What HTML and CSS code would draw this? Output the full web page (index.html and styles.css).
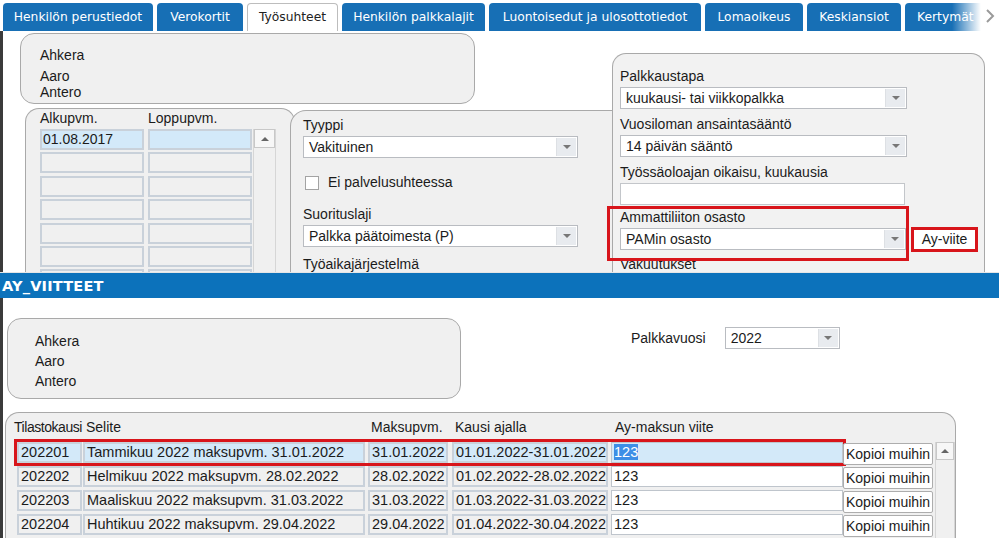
FILE: index.html
```html
<!DOCTYPE html>
<html lang="fi">
<head>
<meta charset="utf-8">
<title>Työsuhteet – AY_VIITTEET</title>
<link rel="stylesheet" href="styles.css">
</head>
<body>
<div class="page">
  <nav class="tabs">
    <div class="tab t1">Henkilön perustiedot</div>
    <div class="tab t2">Verokortit</div>
    <div class="tab t3 active">Työsuhteet</div>
    <div class="tab t4">Henkilön palkkalajit</div>
    <div class="tab t5">Luontoisedut ja ulosottotiedot</div>
    <div class="tab t6">Lomaoikeus</div>
    <div class="tab t7">Keskiansiot</div>
    <div class="tab t8">Kertymät</div>
    <div class="tab-more"><svg width="10" height="14" viewBox="0 0 10 14"><polyline points="2,1 8,7 2,13" fill="none" stroke="#9a9a9a" stroke-width="2"/></svg></div>
  </nav>

  <section class="top">
    <div class="namebox top-name">
      <div class="surname">Ahkera</div>
      <div>Aaro</div>
      <div>Antero</div>
    </div>

    <div class="dates">
      <div class="dates-head">
        <span class="dh">Alkupvm.</span>
        <span class="dh">Loppupvm.</span>
      </div>
      <div class="dates-body">
        <div class="dates-grid">
          <div class="cell sel">01.08.2017</div><div class="cell sel"></div>
          <div class="cell"></div><div class="cell"></div>
          <div class="cell"></div><div class="cell"></div>
          <div class="cell"></div><div class="cell"></div>
          <div class="cell"></div><div class="cell"></div>
          <div class="cell"></div><div class="cell"></div>
          <div class="cell"></div><div class="cell"></div>
        </div>
        <div class="vscroll dscroll"><div class="vbtn"></div></div>
      </div>
    </div>

    <div class="mid">
      <div class="lbl">Tyyppi</div>
      <div class="select w275"><span class="val">Vakituinen</span><span class="arrow"></span></div>
      <label class="check"><span class="box"></span>Ei palvelusuhteessa</label>
      <div class="lbl l-suor">Suorituslaji</div>
      <div class="select w275"><span class="val">Palkka päätoimesta (P)</span><span class="arrow"></span></div>
      <div class="lbl l-tyo">Työaikajärjestelmä</div>
    </div>

    <div class="right">
      <div class="lbl first">Palkkaustapa</div>
      <div class="select w287"><span class="val">kuukausi- tai viikkopalkka</span><span class="arrow"></span></div>
      <div class="lbl">Vuosiloman ansaintasääntö</div>
      <div class="select w287"><span class="val">14 päivän sääntö</span><span class="arrow"></span></div>
      <div class="lbl">Työssäoloajan oikaisu, kuukausia</div>
      <div class="input w285"></div>
      <div class="union-row">
        <div class="hl-box">
          <div class="lbl tight">Ammattiliiton osasto</div>
          <div class="select w286"><span class="val">PAMin osasto</span><span class="arrow"></span></div>
        </div>
        <button class="btn ay-btn">Ay-viite</button>
      </div>
      <div class="lbl l-vak">Vakuutukset</div>
    </div>
  </section>

  <div class="bar">AY_VIITTEET</div>

  <section class="lower">
    <div class="lower-head">
      <div class="namebox low-name">
        <div>Ahkera</div>
        <div>Aaro</div>
        <div>Antero</div>
      </div>
      <div class="year">
        <span class="year-lbl">Palkkavuosi</span>
        <div class="select w115"><span class="val">2022</span><span class="arrow"></span></div>
      </div>
    </div>

    <div class="gpanel">
      <div class="ghead">
        <span class="gh c-h1">Tilastokausi</span>
        <span class="gh c-h2">Selite</span>
        <span class="gh c-h3">Maksupvm.</span>
        <span class="gh c-h4">Kausi ajalla</span>
        <span class="gh">Ay-maksun viite</span>
      </div>
      <div class="gbody">
        <div class="grows">
          <div class="grow">
            <div class="gcells current">
              <div class="cell c1">202201</div>
              <div class="cell c2">Tammikuu 2022 maksupvm. 31.01.2022</div>
              <div class="cell c3">31.01.2022</div>
              <div class="cell c4">01.01.2022-31.01.2022</div>
              <div class="ref c5"><span class="selected-text">123</span></div>
            </div>
            <button class="btn copy">Kopioi muihin</button>
          </div>
          <div class="grow">
            <div class="gcells">
              <div class="cell c1">202202</div>
              <div class="cell c2">Helmikuu 2022 maksupvm. 28.02.2022</div>
              <div class="cell c3">28.02.2022</div>
              <div class="cell c4">01.02.2022-28.02.2022</div>
              <div class="ref c5">123</div>
            </div>
            <button class="btn copy">Kopioi muihin</button>
          </div>
          <div class="grow">
            <div class="gcells">
              <div class="cell c1">202203</div>
              <div class="cell c2">Maaliskuu 2022 maksupvm. 31.03.2022</div>
              <div class="cell c3">31.03.2022</div>
              <div class="cell c4">01.03.2022-31.03.2022</div>
              <div class="ref c5">123</div>
            </div>
            <button class="btn copy">Kopioi muihin</button>
          </div>
          <div class="grow">
            <div class="gcells">
              <div class="cell c1">202204</div>
              <div class="cell c2">Huhtikuu 2022 maksupvm. 29.04.2022</div>
              <div class="cell c3">29.04.2022</div>
              <div class="cell c4">01.04.2022-30.04.2022</div>
              <div class="ref c5">123</div>
            </div>
            <button class="btn copy">Kopioi muihin</button>
          </div>
          <div class="grow">
            <div class="gcells">
              <div class="cell c1"></div>
              <div class="cell c2"></div>
              <div class="cell c3"></div>
              <div class="cell c4"></div>
              <div class="ref c5"></div>
            </div>
            <button class="btn copy blank"></button>
          </div>
        </div>
        <div class="vscroll gscroll"><div class="vbtn"></div></div>
      </div>
    </div>
  </section>
</div>
</body>
</html>
```

FILE: styles.css
```css
html, body {
  margin: 0;
  padding: 0;
  background: #fff;
}

.page {
  width: 999px;
  height: 538px;
  overflow: hidden;
  font-family: "Liberation Sans", Arial, sans-serif;
  font-size: 14px;
  color: #1b1b1b;
}

/* ---------- tabs ---------- */
.tabs {
  position: relative;
  display: flex;
  align-items: flex-end;
  gap: 4px;
  height: 31px;
  padding-left: 3px;
  background: #fff;
  overflow: hidden;
}

.tab {
  flex: none;
  box-sizing: border-box;
  height: 28px;
  line-height: 28px;
  background: #176fb5;
  color: #fff;
  font-family: "DejaVu Sans", sans-serif;
  font-size: 12.3px;
  text-align: center;
  white-space: nowrap;
  border-radius: 4px 4px 0 0;
}
.t1 { width: 150px; }
.t2 { width: 86px; }
.t3 { width: 91px; }
.t4 { width: 143px; }
.t5 { width: 212px; }
.t6 { width: 98px; }
.t7 { width: 94px; }
.t8 { width: 80px; text-align: left; padding-left: 12px; }

.tab.active {
  background: #fff;
  color: #222;
  border: 1px solid #bdbdbd;
  border-bottom: none;
  line-height: 27px;
}

.tabs::after {
  content: "";
  position: absolute;
  top: 0;
  bottom: 0;
  left: 952px;
  width: 34px;
  background: linear-gradient(to right, rgba(255,255,255,0), #fff 85%);
}

.tab-more {
  position: absolute;
  right: 4px;
  top: 9px;
  z-index: 2;
}

/* ---------- shared controls ---------- */
.namebox {
  box-sizing: border-box;
  background: #f0f0f0;
  border: 1px solid #a9a9a9;
  border-radius: 14px;
}

.lbl {
  line-height: 17px;
  white-space: nowrap;
}

.select {
  display: flex;
  box-sizing: border-box;
  height: 22px;
  margin-top: 2px;
  background: #fff;
  border: 1px solid #b9bcc1;
}
.select .val {
  flex: 1;
  padding-left: 5px;
  line-height: 20px;
  white-space: nowrap;
  overflow: hidden;
}
.select .arrow {
  width: 19px;
  margin: 1px;
  background: #e8ebef;
  border-left: 1px solid #dde0e4;
  display: flex;
  align-items: center;
  justify-content: center;
}
.select .arrow::before {
  content: "";
  border-left: 4px solid transparent;
  border-right: 4px solid transparent;
  border-top: 4px solid #777;
}

.w275 { width: 275px; }
.w285 { width: 285px; }
.w286 { width: 286px; }
.w287 { width: 287px; }
.w115 { width: 115px; }

.input {
  box-sizing: border-box;
  height: 22px;
  margin-top: 2px;
  background: #fff;
  border: 1px solid #c3c6ca;
}

.btn {
  box-sizing: border-box;
  padding: 0;
  background: #fff;
  border: 1px solid #adadad;
  border-radius: 2px;
  font-family: "Liberation Sans", Arial, sans-serif;
  font-size: 14px;
  color: #1b1b1b;
}

.cell {
  box-sizing: border-box;
  height: 21px;
  background: #f0f0f0;
  border: 2px solid #c9d1da;
  line-height: 17px;
  padding-left: 2px;
  white-space: nowrap;
  overflow: hidden;
}
.cell.sel { background: #d3e9f9; }

.vscroll {
  box-sizing: border-box;
  background: #f0f0f0;
  border-left: 1px solid #d6d6d6;
  border-right: 1px solid #d6d6d6;
}
.vbtn {
  box-sizing: border-box;
  height: 19px;
  background: #f7f7f7;
  border: 1px solid #c8c8c8;
  display: flex;
  align-items: center;
  justify-content: center;
}
.vbtn::before {
  content: "";
  border-left: 4px solid transparent;
  border-right: 4px solid transparent;
  border-bottom: 4px solid #666;
}

/* ---------- top section ---------- */
.top {
  display: grid;
  height: 241px;
  overflow: hidden;
  background: #fff;
  border-left: 3px solid #3b3b3b;
  grid-template-columns: 17px 5px 265px 5px 180px 137px 373px 1fr;
  grid-template-rows: 2px 20px 51px 4px 2px 1fr;
}

.top-name {
  grid-column: 2 / 6;
  grid-row: 2 / 4;
  padding: 13px 0 0 19px;
  line-height: 16px;
}
.top-name .surname { margin-bottom: 5px; }

.dates {
  grid-column: 3 / 5;
  grid-row: 5 / 7;
  box-sizing: border-box;
  background: #f0f0f0;
  border: 1px solid #a9a9a9;
  border-bottom: none;
  border-radius: 14px 14px 0 0;
  padding: 1px 0 0 14px;
}
.dates-head {
  display: flex;
  line-height: 17px;
}
.dh { width: 108px; }
.dates-body {
  display: flex;
  margin-top: 2px;
}
.dates-grid {
  display: grid;
  grid-template-columns: 104px 104px;
  column-gap: 4px;
  row-gap: 2.4px;
  grid-auto-rows: 21px;
}
.dates-grid .cell { padding-left: 1px; }
.dscroll {
  width: 23px;
  margin-left: 1px;
}

.mid {
  grid-column: 4 / 8;
  grid-row: 6 / 7;
  box-sizing: border-box;
  background: #f0f0f0;
  border: 1px solid #a9a9a9;
  border-bottom: none;
  border-radius: 16px 0 0 0;
  padding: 6px 0 0 12px;
}
.check {
  display: flex;
  align-items: center;
  margin-top: 17px;
  height: 15px;
  line-height: 15px;
}
.check .box {
  box-sizing: border-box;
  width: 14px;
  height: 14px;
  margin: 0 9px 0 2px;
  background: #fff;
  border: 1px solid #a3a3a3;
}
.l-suor { margin-top: 16px; }
.l-tyo { margin-top: 9px; }

.right {
  grid-column: 7 / 8;
  grid-row: 3 / 7;
  box-sizing: border-box;
  background: #f2f2f2;
  border: 1px solid #a9a9a9;
  border-bottom: none;
  border-radius: 14px 14px 0 0;
  padding: 0 0 0 7px;
}
.right .lbl { margin-top: 7px; }
.right .lbl.first { margin-top: 14px; }
.right .lbl.tight { margin-top: 0; }

.union-row {
  display: flex;
  align-items: flex-start;
}
.hl-box {
  position: relative;
  z-index: 1;
  margin: 1px 0 0 -13px;
  padding: 0 0 8px 10px;
  border: 3px solid #d8151b;
}
.ay-btn {
  margin: 22px 0 0 2px;
  width: 67px;
  height: 25px;
  border: 3px solid #d8151b;
  border-radius: 0;
  line-height: 19px;
}
.right .l-vak { margin-top: -5px; }

/* ---------- blue title bar ---------- */
.bar {
  height: 26px;
  line-height: 26px;
  padding-left: 2px;
  background: #0c72bb;
  color: #fff;
  font-family: "DejaVu Sans", sans-serif;
  font-weight: bold;
  font-size: 14.5px;
  letter-spacing: 0.2px;
  border-top: 1px solid #e6e6e6;
  box-sizing: border-box;
}

/* ---------- lower section ---------- */
.lower {
  height: 241px;
  overflow: hidden;
  background: #fff;
  border-left: 3px solid #3b3b3b;
  padding: 20px 0 0 2px;
  box-sizing: border-box;
}
.lower-head {
  display: flex;
  align-items: flex-start;
}
.low-name {
  width: 454px;
  height: 81px;
  margin-left: 2px;
  padding: 12px 0 0 27px;
  line-height: 20px;
}
.year {
  display: flex;
  align-items: center;
  margin: 9px 0 0 170px;
}
.year-lbl { margin-right: 19px; }
.year .select { margin-top: 0; }

.gpanel {
  box-sizing: border-box;
  width: 951px;
  height: 140px;
  margin-top: 13px;
  background: #f0f0f0;
  border: 1px solid #a9a9a9;
  border-bottom: none;
  border-radius: 14px 14px 0 0;
  padding: 6px 0 0 0;
}
.ghead {
  display: flex;
  padding-left: 8px;
  line-height: 17px;
  white-space: nowrap;
}
.c-h1 { width: 72px; letter-spacing: -0.45px; }
.c-h2 { width: 285px; }
.c-h3 { width: 84px; }
.c-h4 { width: 160px; }

.gbody {
  display: flex;
  margin-top: 6px;
  padding-left: 11px;
}
.grows {
  display: flex;
  flex-direction: column;
  gap: 3px;
}
.grow {
  display: flex;
  align-items: flex-start;
  height: 21px;
}
.gcells {
  display: flex;
  width: 826px;
  font-size: 14.5px;
}
.gcells.current {
  outline: 3px solid #d8151b;
}
.c1 { width: 65px; }
.c2 { width: 282px; margin-left: 1px; }
.c3 { width: 80px; margin-left: 3px; }
.c4 { width: 156px; margin-left: 4px; }
.c5 { width: 232px; margin-left: 3px; }

.ref {
  box-sizing: border-box;
  height: 21px;
  background: #fff;
  border: 1px solid #bfc5cc;
  line-height: 19px;
  padding-left: 2px;
}
.current .cell,
.current .ref {
  background: #d3e9f9;
}
.selected-text {
  background: #3d8ee6;
  color: #fff;
}

.copy {
  flex: none;
  width: 90px;
  height: 22px;
  margin-top: 1px;
  text-align: left;
  padding-left: 2px;
  line-height: 20px;
}

.gscroll {
  width: 21px;
  margin-left: 2px;
  height: 120px;
}
.gscroll .vbtn { height: 18px; }
```
